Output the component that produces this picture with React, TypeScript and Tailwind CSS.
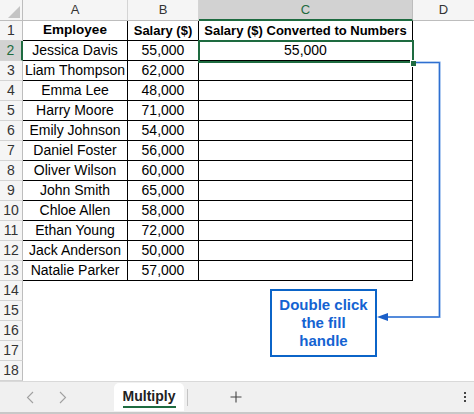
import React from "react";

const rows: [string, string][] = [
  ["Jessica Davis", "55,000"],
  ["Liam Thompson", "62,000"],
  ["Emma Lee", "48,000"],
  ["Harry Moore", "71,000"],
  ["Emily Johnson", "54,000"],
  ["Daniel Foster", "56,000"],
  ["Oliver Wilson", "60,000"],
  ["John Smith", "65,000"],
  ["Chloe Allen", "58,000"],
  ["Ethan Young", "72,000"],
  ["Jack Anderson", "50,000"],
  ["Natalie Parker", "57,000"],
];

function RowHead({ n, selected }: { n: number; selected?: boolean }) {
  return (
    <div
      className={
        "w-[23px] h-full flex items-center justify-center border-b border-b-[#d4d4d4] text-[14px] " +
        (selected
          ? "bg-[#d2d2d2] text-[#1e6b40] border-r-2 border-r-[#1e6b40]"
          : "bg-[#f5f5f5] text-[#333] border-r border-r-[#bdbdbd]")
      }
    >
      {n}
    </div>
  );
}

export default function App() {
  const font = { fontFamily: '"Liberation Sans", Arial, sans-serif' };
  return (
    <div className="relative w-[474px] h-[414px] bg-white overflow-hidden text-black" style={font}>
      {/* column header row */}
      <div className="flex h-[21px]">
        <div className="relative w-[23px] h-full bg-[#f5f5f5] border-r border-r-[#bdbdbd] border-b border-b-[#bdbdbd]">
          <svg className="absolute right-[2px] bottom-[2px]" width="12" height="12" viewBox="0 0 12 12">
            <polygon points="12,0 12,12 0,12" fill="#c4c4c4" />
          </svg>
        </div>
        <div className="w-[105px] h-full bg-[#f5f5f5] border-r border-r-[#d4d4d4] border-b border-b-[#bdbdbd] flex items-center justify-center text-[13px] text-[#333]">A</div>
        <div className="w-[71px] h-full bg-[#f5f5f5] border-r border-r-[#d4d4d4] border-b border-b-[#bdbdbd] flex items-center justify-center text-[13px] text-[#333]">B</div>
        <div className="w-[214px] h-full bg-[#d2d2d2] border-r border-r-[#bdbdbd] border-b-2 border-b-[#1e6b40] flex items-center justify-center text-[13px] text-[#1e6b40]">C</div>
        <div className="flex-1 h-full bg-[#f5f5f5] border-b border-b-[#bdbdbd] flex items-center justify-center text-[13px] text-[#333]">D</div>
      </div>

      {/* row 1 header */}
      <div className="flex h-[20px]">
        <RowHead n={1} />
        <div className="w-[105px] h-full border-r border-b border-black flex items-center justify-center text-[13.5px] font-bold">Employee</div>
        <div className="w-[71px] h-full border-r border-b border-black flex items-center justify-center text-[13px] font-bold">Salary ($)</div>
        <div className="w-[214px] h-full border-r border-b border-black flex items-center justify-center text-[13px] font-bold whitespace-nowrap">Salary ($) Converted to Numbers</div>
        <div className="flex-1" />
      </div>

      {rows.map(([name, sal], i) => (
        <div key={name} className="flex h-[20px]">
          <RowHead n={i + 2} selected={i === 0} />
          <div className="w-[105px] h-full border-r border-b border-black flex items-center justify-center text-[14px] whitespace-nowrap">{name}</div>
          <div className="w-[71px] h-full border-r border-b border-black flex items-center justify-center text-[14px]">{sal}</div>
          <div className="w-[214px] h-full border-r border-b border-black flex items-center justify-center text-[14px]">{i === 0 ? "55,000" : ""}</div>
          <div className="flex-1" />
        </div>
      ))}

      {[14, 15, 16, 17, 18].map((n) => (
        <div key={n} className="flex h-[20px]">
          <RowHead n={n} />
          <div className="flex-1" />
        </div>
      ))}

      {/* tab bar */}
      <div className="relative h-[33px] bg-[#f0f0f0] border-t border-t-[#d9d9d9] border-b-2 border-b-[#c8c8c8] flex items-stretch">
        <div className="w-[114px] flex items-center">
          <svg className="ml-[26px]" width="8" height="13" viewBox="0 0 8 13">
            <path d="M7 1 L1.5 6.5 L7 12" fill="none" stroke="#a0a0a0" strokeWidth="1.1" />
          </svg>
          <svg className="ml-[25px]" width="8" height="13" viewBox="0 0 8 13">
            <path d="M1 1 L6.5 6.5 L1 12" fill="none" stroke="#a0a0a0" strokeWidth="1.1" />
          </svg>
        </div>
        <div className="w-[70px] bg-white rounded-t-[5px] mt-[1px] mb-[1px] flex flex-col items-center justify-center">
          <span className="text-[14px] font-bold text-[#222] leading-[16px] mt-[1px]">Multiply</span>
          <div className="w-[53px] h-[2px] bg-[#1e6b40] mt-[2px]" />
        </div>
        <div className="w-[1px] h-[17px] bg-[#c4c4c4] self-center ml-[3px]" />
        <div className="ml-[42px] flex items-center">
          <svg width="12" height="12" viewBox="0 0 12 12">
            <path d="M6 0.5v11M0.5 6h11" stroke="#444" strokeWidth="1.1" />
          </svg>
        </div>
        <div className="ml-auto mr-[8px] flex flex-col items-center justify-center gap-[2px]">
          <div className="w-[2px] h-[2px] bg-[#444]" />
          <div className="w-[2px] h-[2px] bg-[#444]" />
          <div className="w-[2px] h-[2px] bg-[#444]" />
        </div>
      </div>

      {/* selection box C2 */}
      <div className="absolute left-[198px] top-[40px] w-[216px] h-[23px] border-2 border-[#1e6b40] pointer-events-none" />
      <div className="absolute left-[410px] top-[60px] w-[5px] h-[5px] bg-[#1e6b40] border border-white box-content" />

      {/* connector arrow */}
      <svg className="absolute left-0 top-0" width="474" height="414">
        <path d="M416 62.5 H439.5 V317 H384" fill="none" stroke="#7aa7e6" strokeWidth="2.2" />
        <path d="M416 62.5 H439.5 V317 H384" fill="none" stroke="#2f6fd0" strokeWidth="1" />
        <polygon points="377,317 388,313 388,321" fill="#1a5fc8" />
      </svg>

      {/* callout */}
      <div className="absolute left-[270px] top-[289px] w-[107px] h-[68px] border-2 border-[#0b64c8] bg-white flex flex-col items-center justify-center text-[15px] font-bold leading-[18px] text-[#1463d2]">
        <span>Double click</span>
        <span>the fill</span>
        <span>handle</span>
      </div>
    </div>
  );
}
